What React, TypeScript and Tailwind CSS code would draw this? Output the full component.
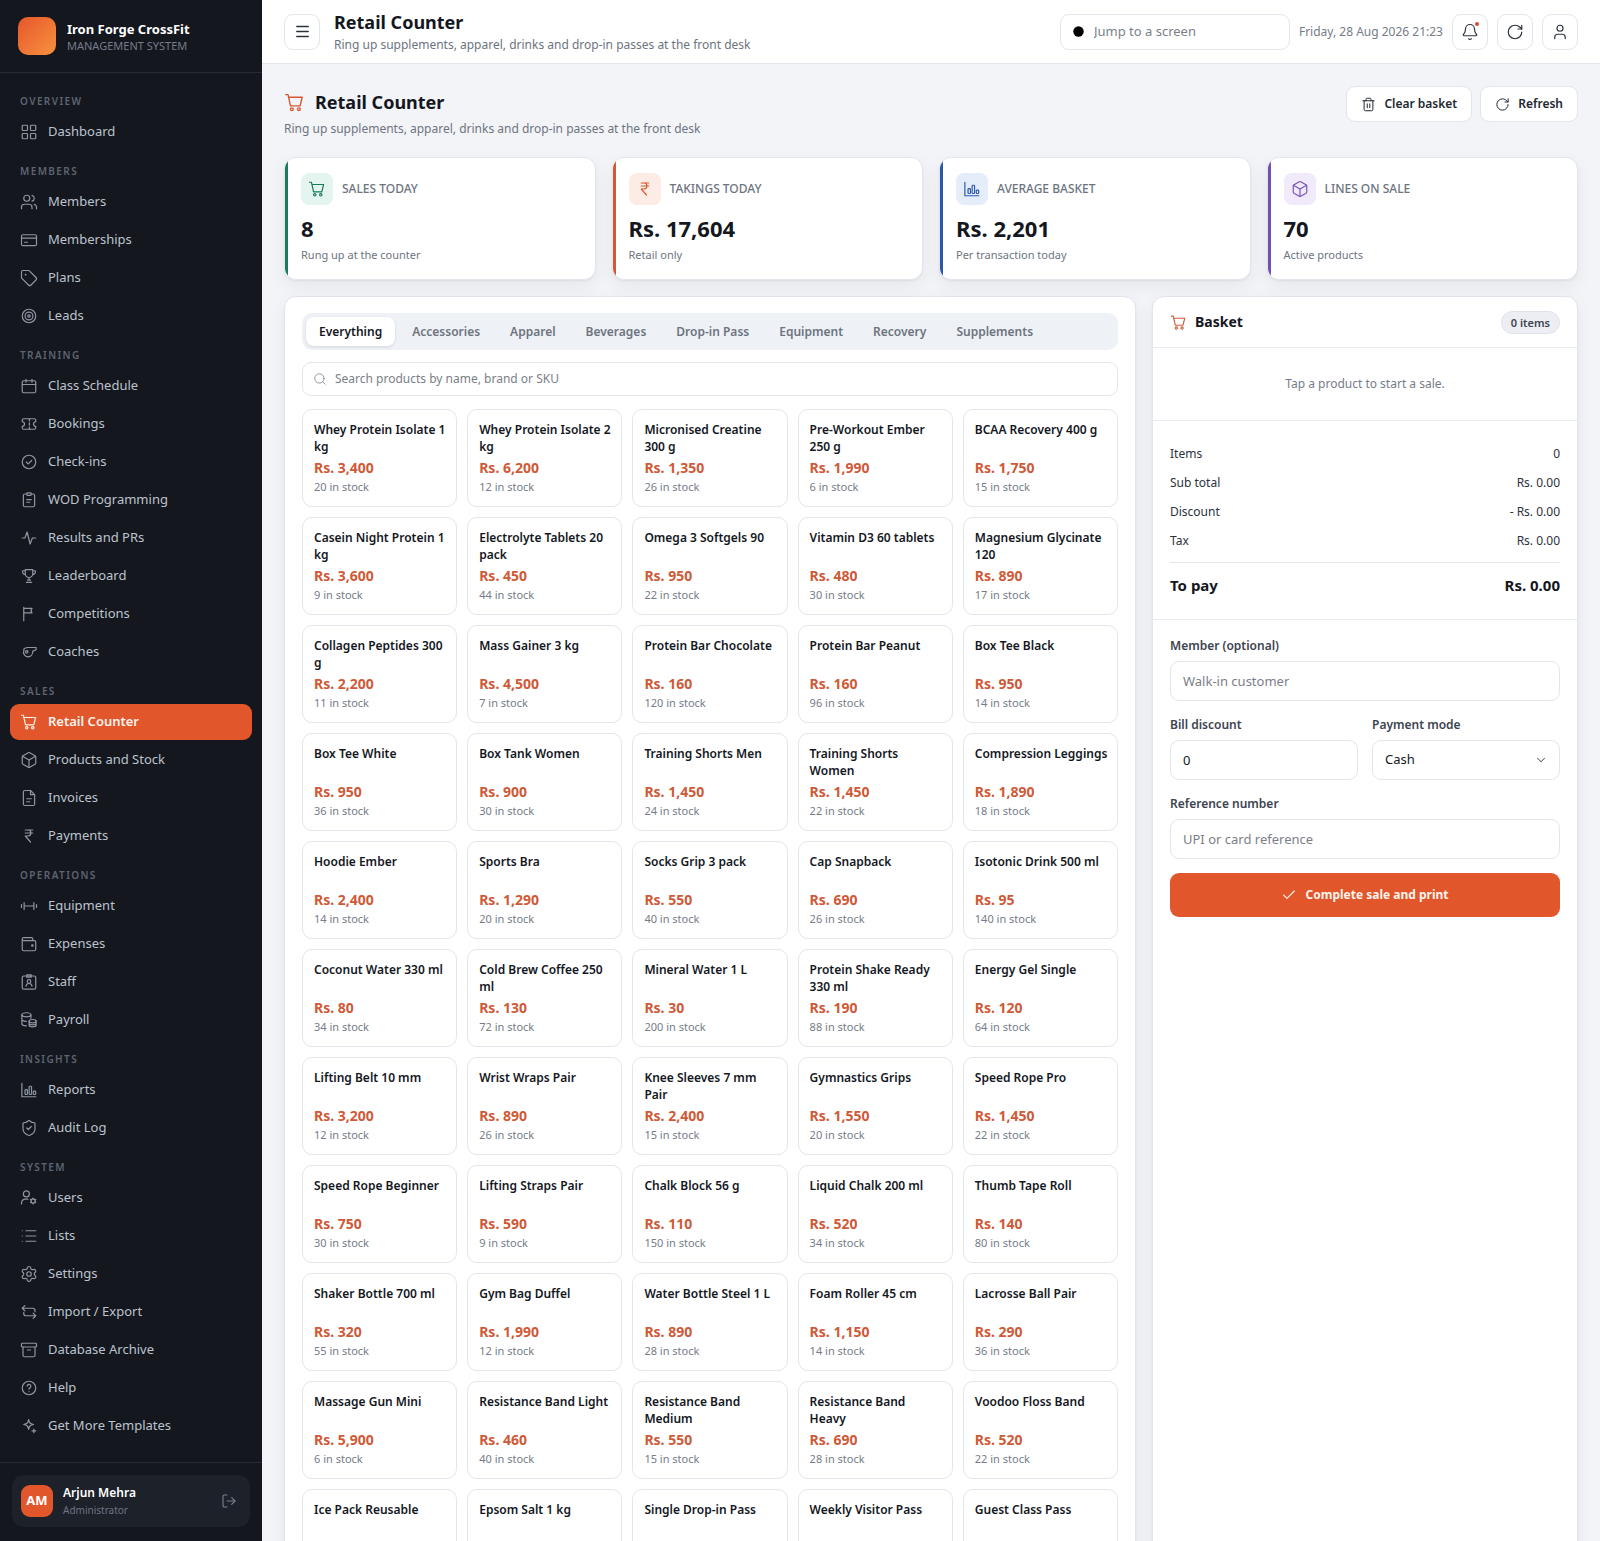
import type { ReactNode } from "react";
import {
  Archive,
  Bell,
  Box,
  Check,
  ChevronDown,
  LayoutGrid,
  List,
  LogOut,
  Menu,
  RotateCw,
  Search,
  Settings,
  ShieldCheck,
  Tag,
  Trash2,
  User,
  Users,
} from "lucide-react";

const Glyph = ({ size = 18, children }: { size?: number; children: ReactNode }) => (
  <svg
    width={size}
    height={size}
    viewBox="0 0 24 24"
    fill="none"
    stroke="currentColor"
    strokeWidth={1.6}
    strokeLinecap="round"
    strokeLinejoin="round"
    aria-hidden="true"
    className="shrink-0"
  >
    {children}
  </svg>
);

const CartIcon = ({ size }: { size?: number }) => (
  <Glyph size={size}>
    <path d="M2 3h2.6l2.8 12.8h11L20.8 6H5.3" />
    <circle cx="9" cy="19.7" r="1.6" />
    <circle cx="17" cy="19.7" r="1.6" />
  </Glyph>
);

const RupeeIcon = ({ size }: { size?: number }) => (
  <Glyph size={size}>
    <path d="M7 4h10M7 8h10M7 4h3.5a4 4 0 0 1 0 8H7l7 8" />
  </Glyph>
);

const BarsIcon = ({ size }: { size?: number }) => (
  <Glyph size={size}>
    <path d="M2.5 3v18H21" />
    <rect x="6.7" y="11.5" width="3.2" height="6.5" rx="1" />
    <rect x="12.2" y="7" width="3.2" height="11" rx="1" />
    <rect x="17.7" y="13.5" width="3.2" height="4.5" rx="1" />
  </Glyph>
);

const nav = [
  {
    title: "Overview",
    items: [{ name: "Dashboard", icon: <LayoutGrid size={18} strokeWidth={1.6} /> }],
  },
  {
    title: "Members",
    items: [
      { name: "Members", icon: <Users size={18} strokeWidth={1.6} /> },
      {
        name: "Memberships",
        icon: (
          <Glyph>
            <rect x="2" y="5" width="20" height="14.5" rx="2" />
            <path d="M2 9.5h20M6 15h4" />
          </Glyph>
        ),
      },
      {
        name: "Plans",
        icon: <Tag size={18} strokeWidth={1.6} />,
      },
      {
        name: "Leads",
        icon: (
          <Glyph>
            <circle cx="12" cy="12" r="9" />
            <circle cx="12" cy="12" r="5.2" />
            <circle cx="12" cy="12" r="1.6" />
          </Glyph>
        ),
      },
    ],
  },
  {
    title: "Training",
    items: [
      {
        name: "Class Schedule",
        icon: (
          <Glyph>
            <rect x="3" y="5" width="18" height="16" rx="2" />
            <path d="M8 3v4M16 3v4M3 10h18" />
          </Glyph>
        ),
      },
      {
        name: "Bookings",
        icon: (
          <Glyph>
            <path d="M3 7a2 2 0 0 1 2-2h14a2 2 0 0 1 2 2v2a3 3 0 0 0 0 6v2a2 2 0 0 1-2 2H5a2 2 0 0 1-2-2v-2a3 3 0 0 0 0-6z" />
            <path d="M12.5 5v3M12.5 10.5v3M12.5 16v3" />
          </Glyph>
        ),
      },
      {
        name: "Check-ins",
        icon: (
          <Glyph>
            <circle cx="12" cy="12" r="9" />
            <path d="m8.5 12 2.5 2.5 4.5-4.5" />
          </Glyph>
        ),
      },
      {
        name: "WOD Programming",
        icon: (
          <Glyph>
            <path d="M9 4H6.5a2 2 0 0 0-2 2v13a2 2 0 0 0 2 2h11a2 2 0 0 0 2-2V6a2 2 0 0 0-2-2H15" />
            <rect x="9" y="2.5" width="6" height="3.2" rx="1" />
            <path d="M9 11.5h6M9 15h4" />
          </Glyph>
        ),
      },
      {
        name: "Results and PRs",
        icon: (
          <Glyph>
            <path d="M3 12h3.500l3-8 4 16 3-8H21" />
          </Glyph>
        ),
      },
      {
        name: "Leaderboard",
        icon: (
          <Glyph>
            <path d="M7 3.5h10v5.500a5 5 0 0 1-10 0zM7 5H3.500v1.500a3.500 3.500 0 0 0 3.800 3.500M17 5h3.500v1.500a3.500 3.500 0 0 1-3.800 3.500M12 14v3.500M10 17.500h4M8.500 20.500h7" />
          </Glyph>
        ),
      },
      {
        name: "Competitions",
        icon: (
          <Glyph>
            <path d="M5 21V3M5 4.500h11l-1.500 3 1.500 3H5" />
          </Glyph>
        ),
      },
      {
        name: "Coaches",
        icon: (
          <Glyph>
            <path d="M10.500 6h11v3l-4.300 1.800c0 4.400-2.700 7.700-6.500 7.700a6.200 6.200 0 0 1-5.400-8.800M4.800 8.500C6 6.800 8 6 10.500 6" />
            <circle cx="9" cy="11.800" r="1.600" />
          </Glyph>
        ),
      },
    ],
  },
  {
    title: "Sales",
    items: [
      { name: "Retail Counter", icon: <CartIcon />, active: true },
      { name: "Products and Stock", icon: <Box size={18} strokeWidth={1.6} /> },
      {
        name: "Invoices",
        icon: (
          <Glyph>
            <path d="M14 2H6.500a2 2 0 0 0-2 2v16a2 2 0 0 0 2 2h11a2 2 0 0 0 2-2V7.500zM14 2v5.500h5.500M9 13h6M9 17h4" />
          </Glyph>
        ),
      },
      { name: "Payments", icon: <RupeeIcon /> },
    ],
  },
  {
    title: "Operations",
    items: [
      {
        name: "Equipment",
        icon: (
          <Glyph>
            <path d="M2 10v4M5.500 7.500v9M5.500 12h13M18.500 7.500v9M22 10v4" />
          </Glyph>
        ),
      },
      {
        name: "Expenses",
        icon: (
          <Glyph>
            <path d="M17 7.500V5a1.500 1.500 0 0 0-1.500-1.500H5a2 2 0 0 0 0 4h14a2 2 0 0 1 2 2V19a2 2 0 0 1-2 2H5a2 2 0 0 1-2-2V5.500" />
            <circle cx="16.500" cy="14" r="1" />
          </Glyph>
        ),
      },
      {
        name: "Staff",
        icon: (
          <Glyph>
            <rect x="3" y="4" width="18" height="17.500" rx="2" />
            <path d="M9 2.500h6v3H9zM8 17.500c.4-2.400 2-3.500 4-3.500s3.600 1.100 4 3.500" />
            <circle cx="12" cy="11.300" r="2.400" />
          </Glyph>
        ),
      },
      {
        name: "Payroll",
        icon: (
          <Glyph>
            <ellipse cx="8.500" cy="5" rx="6" ry="2.700" />
            <path d="M2.500 5v12c0 1.500 2.700 2.700 6 2.700M2.500 11c0 1.500 2.700 2.700 6 2.700M14.500 5v4.500" />
            <ellipse cx="16.800" cy="13.500" rx="4.700" ry="2.200" />
            <path d="M12.100 13.500V19c0 1.200 2.100 2.200 4.700 2.200s4.700-1 4.700-2.200v-5.500M12.100 16.300c0 1.200 2.100 2.200 4.700 2.200s4.700-1 4.700-2.200" />
          </Glyph>
        ),
      },
    ],
  },
  {
    title: "Insights",
    items: [
      { name: "Reports", icon: <BarsIcon /> },
      { name: "Audit Log", icon: <ShieldCheck size={18} strokeWidth={1.6} /> },
    ],
  },
  {
    title: "System",
    items: [
      {
        name: "Users",
        icon: (
          <Glyph>
            <circle cx="8.500" cy="6.500" r="4" />
            <path d="M2 20v-1.500a5 5 0 0 1 5-5h3.500" />
            <circle cx="17.500" cy="16" r="2.800" />
            <path d="M17.500 12v1.200M17.500 18.800V20M21 14l-1 .6M15 17.400l-1 .6M21 18l-1-.6M15 14.600 14 14" />
          </Glyph>
        ),
      },
      { name: "Lists", icon: <List size={18} strokeWidth={1.6} /> },
      { name: "Settings", icon: <Settings size={18} strokeWidth={1.6} /> },
      {
        name: "Import / Export",
        icon: (
          <Glyph>
            <path d="M6.500 3.500 3 7l3.500 3.500M3 7h14a3 3 0 0 1 3 3v1.500M17.500 13.500 21 17l-3.500 3.500M21 17H8a3 3 0 0 1-3-3v-1.500" />
          </Glyph>
        ),
      },
      { name: "Database Archive", icon: <Archive size={18} strokeWidth={1.6} /> },
      {
        name: "Help",
        icon: (
          <Glyph>
            <circle cx="12" cy="12" r="9" />
            <path d="M9.500 9.500a2.500 2.500 0 1 1 3.600 2.300c-.8.400-1.100.9-1.100 1.700M12 16.800v.1" />
          </Glyph>
        ),
      },
      {
        name: "Get More Templates",
        icon: (
          <Glyph>
            <path d="M11.500 3.500c.9 4.500 1.800 5.400 6.500 6.500-4.700 1.100-5.600 2-6.500 6.500-.9-4.500-1.800-5.400-6.500-6.500 4.700-1.100 5.600-2 6.500-6.500zM18.500 16v5M16 18.500h5" />
          </Glyph>
        ),
      },
    ],
  },
];

const stats = [
  {
    label: "Sales today",
    value: "8",
    note: "Rung up at the counter",
    icon: <CartIcon size={18} />,
    edge: "bg-[#1b7a5a]",
    tile: "bg-[#e3f5ee] text-[#1b7a5a]",
  },
  {
    label: "Takings today",
    value: "Rs. 17,604",
    note: "Retail only",
    icon: <RupeeIcon size={18} />,
    edge: "bg-[#cf5a35]",
    tile: "bg-[#fdece5] text-[#d95c34]",
  },
  {
    label: "Average basket",
    value: "Rs. 2,201",
    note: "Per transaction today",
    icon: <BarsIcon size={18} />,
    edge: "bg-[#2c56a8]",
    tile: "bg-[#e6edfa] text-[#2f5bb0]",
  },
  {
    label: "Lines on sale",
    value: "70",
    note: "Active products",
    icon: <Box size={18} strokeWidth={1.6} />,
    edge: "bg-[#7350b0]",
    tile: "bg-[#f0eafb] text-[#7a55bd]",
  },
];

const tabs = [
  "Everything",
  "Accessories",
  "Apparel",
  "Beverages",
  "Drop-in Pass",
  "Equipment",
  "Recovery",
  "Supplements",
];

const products: [string, string, number][] = [
  ["Whey Protein Isolate 1 kg", "3,400", 20],
  ["Whey Protein Isolate 2 kg", "6,200", 12],
  ["Micronised Creatine 300 g", "1,350", 26],
  ["Pre-Workout Ember 250 g", "1,990", 6],
  ["BCAA Recovery 400 g", "1,750", 15],
  ["Casein Night Protein 1 kg", "3,600", 9],
  ["Electrolyte Tablets 20 pack", "450", 44],
  ["Omega 3 Softgels 90", "950", 22],
  ["Vitamin D3 60 tablets", "480", 30],
  ["Magnesium Glycinate 120", "890", 17],
  ["Collagen Peptides 300 g", "2,200", 11],
  ["Mass Gainer 3 kg", "4,500", 7],
  ["Protein Bar Chocolate", "160", 120],
  ["Protein Bar Peanut", "160", 96],
  ["Box Tee Black", "950", 14],
  ["Box Tee White", "950", 36],
  ["Box Tank Women", "900", 30],
  ["Training Shorts Men", "1,450", 24],
  ["Training Shorts Women", "1,450", 22],
  ["Compression Leggings", "1,890", 18],
  ["Hoodie Ember", "2,400", 14],
  ["Sports Bra", "1,290", 20],
  ["Socks Grip 3 pack", "550", 40],
  ["Cap Snapback", "690", 26],
  ["Isotonic Drink 500 ml", "95", 140],
  ["Coconut Water 330 ml", "80", 34],
  ["Cold Brew Coffee 250 ml", "130", 72],
  ["Mineral Water 1 L", "30", 200],
  ["Protein Shake Ready 330 ml", "190", 88],
  ["Energy Gel Single", "120", 64],
  ["Lifting Belt 10 mm", "3,200", 12],
  ["Wrist Wraps Pair", "890", 26],
  ["Knee Sleeves 7 mm Pair", "2,400", 15],
  ["Gymnastics Grips", "1,550", 20],
  ["Speed Rope Pro", "1,450", 22],
  ["Speed Rope Beginner", "750", 30],
  ["Lifting Straps Pair", "590", 9],
  ["Chalk Block 56 g", "110", 150],
  ["Liquid Chalk 200 ml", "520", 34],
  ["Thumb Tape Roll", "140", 80],
  ["Shaker Bottle 700 ml", "320", 55],
  ["Gym Bag Duffel", "1,990", 12],
  ["Water Bottle Steel 1 L", "890", 28],
  ["Foam Roller 45 cm", "1,150", 14],
  ["Lacrosse Ball Pair", "290", 36],
  ["Massage Gun Mini", "5,900", 6],
  ["Resistance Band Light", "460", 40],
  ["Resistance Band Medium", "550", 15],
  ["Resistance Band Heavy", "690", 28],
  ["Voodoo Floss Band", "520", 22],
  ["Ice Pack Reusable", "350", 24],
  ["Epsom Salt 1 kg", "280", 32],
  ["Single Drop-in Pass", "500", 999],
  ["Weekly Visitor Pass", "2,000", 999],
  ["Guest Class Pass", "400", 999],
];

const totals = [
  ["Items", "0"],
  ["Sub total", "Rs. 0.00"],
  ["Discount", "- Rs. 0.00"],
  ["Tax", "Rs. 0.00"],
];

const card =
  "rounded-xl border border-[#e2e5eb] bg-white shadow-[0_1px_2px_rgba(20,23,30,0.05),0_6px_18px_rgba(20,23,30,0.06)]";
const iconButton =
  "relative flex size-9 shrink-0 items-center justify-center rounded-[9px] border border-[#e2e5eb] bg-white text-[#2c323d]";
const headButton =
  "flex h-9 items-center gap-2 rounded-[9px] border border-[#e2e5eb] bg-white px-3.5 text-xs font-semibold text-[#22272f]";
const field =
  "h-10 w-full rounded-[9px] border border-[#e2e5eb] bg-white px-3 text-[13px] text-[#14171e] placeholder:text-[#7b8088]";
const fieldLabel = "mb-1.5 block text-xs leading-[19px] font-semibold text-[#3d4450]";

const Sidebar = () => (
  <aside className="sticky top-0 flex h-screen w-[262px] shrink-0 flex-col bg-[#14171e]">
    <div className="flex h-[73px] shrink-0 items-center gap-[11px] border-b border-[#262b35] px-[18px]">
      <span className="size-[38px] rounded-[10px] bg-linear-135 from-[#e6552b] to-[#f7913f]" />
      <div>
        <div className="text-[13px] leading-[18px] font-bold text-white">Iron Forge CrossFit</div>
        <div className="text-[11px] leading-[15px] text-[#747b89] uppercase">Management System</div>
      </div>
    </div>
    <nav className="min-h-0 flex-1 px-2.5 pt-[7px]">
      {nav.map((group) => (
        <div key={group.title}>
          <h2 className="px-2.5 pt-[13px] pb-[5px] text-[10px] leading-4 font-semibold tracking-[1.4px] text-[#5d6472] uppercase">
            {group.title}
          </h2>
          <ul className="flex flex-col gap-0.5">
            {group.items.map((item) => (
              <li key={item.name}>
                <a
                  href="#"
                  className={
                    "active" in item
                      ? "flex h-9 items-center gap-2.5 rounded-[9px] bg-[#e2562b] px-2.5 text-[13px] font-semibold text-[#fff3ec]"
                      : "flex h-9 items-center gap-2.5 rounded-[9px] px-2.5 text-[13px] text-[#bcc3ce] [&_svg]:text-[#8f96a3]"
                  }
                >
                  {item.icon}
                  {item.name}
                </a>
              </li>
            ))}
          </ul>
        </div>
      ))}
    </nav>
    <div className="border-t border-[#262b35] p-3 pb-3.5">
      <div className="flex items-center gap-2.5 rounded-xl bg-[#1d2129] px-[9px] py-[9px]">
        <span className="flex size-8 items-center justify-center rounded-[9px] bg-[#e2562b] text-[13px] font-bold text-white">
          AM
        </span>
        <div className="flex-1">
          <div className="text-xs leading-[18px] font-semibold text-white">Arjun Mehra</div>
          <div className="text-[10px] leading-4 text-[#6d7483]">Administrator</div>
        </div>
        <button type="button" aria-label="Sign out" className="mr-1 text-[#7b8290]">
          <LogOut size={16} strokeWidth={1.6} />
        </button>
      </div>
    </div>
  </aside>
);

const Topbar = () => (
  <header className="sticky top-0 z-10 flex h-16 items-center gap-[9px] border-b border-[#e2e5eb] bg-white px-[22px]">
    <button type="button" aria-label="Toggle menu" className={iconButton}>
      <Menu size={17} strokeWidth={2.2} />
    </button>
    <div className="ml-[5px] flex-1 pt-[3px]">
      <div className="text-lg leading-6 font-bold text-[#14171e]">Retail Counter</div>
      <div className="text-xs leading-[22px] text-[#6d7480]">
        Ring up supplements, apparel, drinks and drop-in passes at the front desk
      </div>
    </div>
    <label className="flex h-9 w-[230px] items-center gap-2.5 rounded-[9px] border border-[#e2e5eb] px-3">
      <svg width="11" height="11" viewBox="0 0 11 11" aria-hidden="true" className="shrink-0">
        <circle cx="5.5" cy="5.5" r="5.2" />
      </svg>
      <input
        type="text"
        aria-label="Jump to a screen"
        placeholder="Jump to a screen"
        className="w-full text-[13px] placeholder:text-[#7b8088]"
      />
    </label>
    <time className="text-xs text-[#757c88]">Friday, 28 Aug 2026 21:23</time>
    <button type="button" aria-label="Notifications" className={iconButton}>
      <Bell size={18} strokeWidth={1.6} />
      <span className="absolute top-[7px] right-2 size-1 rounded-full bg-[#dc4a35]" />
    </button>
    <button type="button" aria-label="Reload" className={iconButton}>
      <RotateCw size={18} strokeWidth={1.6} />
    </button>
    <button type="button" aria-label="Account" className={iconButton}>
      <User size={18} strokeWidth={1.6} />
    </button>
  </header>
);

const Catalogue = () => (
  <section className={`${card} px-[17px] pt-4 pb-[17px]`}>
    <div role="tablist" className="flex flex-wrap gap-1 rounded-[10px] bg-[#eef1f6] p-1">
      {tabs.map((tab, index) => (
        <button
          key={tab}
          type="button"
          role="tab"
          aria-selected={index === 0}
          className={
            index === 0
              ? "h-[29px] rounded-lg bg-white px-[13px] text-xs font-semibold text-[#14171e] shadow-[0_1px_3px_rgba(20,23,30,0.12)]"
              : "h-[29px] rounded-lg px-[13px] text-xs font-semibold text-[#6d7480]"
          }
        >
          {tab}
        </button>
      ))}
    </div>
    <label className="mt-3 flex h-[34px] items-center gap-2 rounded-[9px] border border-[#e2e5eb] px-2.5 text-[#8a919d]">
      <Search size={14} strokeWidth={1.6} className="shrink-0" />
      <input
        type="search"
        aria-label="Search products"
        placeholder="Search products by name, brand or SKU"
        className="w-full text-xs text-[#14171e] placeholder:text-[#7b8088]"
      />
    </label>
    <div className="mt-[13px] grid grid-cols-5 gap-2.5">
      {products.map(([name, price, stock]) => (
        <button
          key={name}
          type="button"
          className="rounded-[10px] border border-[#e2e5eb] bg-white pt-[11px] pr-2 pb-[11px] pl-[11px] text-left"
        >
          <span className="block h-[34px] text-xs leading-[17px] font-semibold text-[#14171e]">
            {name}
          </span>
          <span className="mt-0.5 block text-sm leading-[22px] font-bold text-[#cf5a38]">
            Rs. {price}
          </span>
          <span className="block text-[11px] leading-4 text-[#757c88]">{stock} in stock</span>
        </button>
      ))}
    </div>
  </section>
);

const Basket = () => (
  <section className={card}>
    <div className="flex h-[51px] items-center border-b border-[#e8eaef] px-[17px]">
      <span className="text-[#cf5a38]">
        <CartIcon size={17} />
      </span>
      <h2 className="ml-2 flex-1 text-sm font-bold text-[#14171e]">Basket</h2>
      <span className="rounded-full border border-[#dfe2e9] bg-[#eceef4] px-[9px] text-[11px] leading-[21px] font-semibold text-[#3d4450]">
        0 items
      </span>
    </div>
    <p className="border-b border-[#e8eaef] py-[26px] text-center text-xs leading-5 text-[#757c88]">
      Tap a product to start a sale.
    </p>
    <div className="border-b border-[#e8eaef] px-[17px] pt-[18px] pb-[19px]">
      <dl className="text-xs leading-[29px] text-[#2c323d]">
        {totals.map(([name, amount]) => (
          <div key={name} className="flex justify-between">
            <dt>{name}</dt>
            <dd>{amount}</dd>
          </div>
        ))}
        <div className="mt-[7px] flex justify-between border-t border-[#e2e5eb] pt-2 text-[15px] font-bold text-[#14171e]">
          <dt>To pay</dt>
          <dd>Rs. 0.00</dd>
        </div>
      </dl>
    </div>
    <form className="flex flex-col gap-3.5 px-[17px] py-4">
      <div>
        <label htmlFor="member" className={fieldLabel}>
          Member (optional)
        </label>
        <input id="member" type="text" placeholder="Walk-in customer" className={field} />
      </div>
      <div className="grid grid-cols-2 gap-3.5">
        <div>
          <label htmlFor="discount" className={fieldLabel}>
            Bill discount
          </label>
          <input id="discount" type="text" inputMode="decimal" defaultValue="0" className={field} />
        </div>
        <div>
          <label htmlFor="mode" className={fieldLabel}>
            Payment mode
          </label>
          <div className="relative">
            <select id="mode" className={`${field} appearance-none`}>
              <option>Cash</option>
              <option>Card</option>
              <option>UPI</option>
            </select>
            <ChevronDown
              size={14}
              strokeWidth={1.8}
              className="pointer-events-none absolute top-[13px] right-3 text-[#5a616d]"
            />
          </div>
        </div>
      </div>
      <div>
        <label htmlFor="reference" className={fieldLabel}>
          Reference number
        </label>
        <input id="reference" type="text" placeholder="UPI or card reference" className={field} />
      </div>
      <button
        type="button"
        className="flex h-11 items-center justify-center gap-2 rounded-[9px] bg-[#e2562b] text-xs font-bold text-[#fff3ec]"
      >
        <Check size={16} strokeWidth={1.6} />
        Complete sale and print
      </button>
    </form>
  </section>
);

const App = () => {
  return (
    <div className="flex min-h-screen bg-[#f3f4f8] font-['Noto_Sans',sans-serif] text-[#14171e]">
      <Sidebar />
      <div className="min-w-0 flex-1">
        <Topbar />
        <main className="px-[22px] pt-[22px] pb-8">
          <div className="flex items-start gap-2">
            <div className="flex-1">
              <h1 className="flex items-center gap-2.5 text-lg leading-8 font-bold">
                <span className="text-[#d9582f]">
                  <CartIcon size={21} />
                </span>
                Retail Counter
              </h1>
              <p className="text-xs leading-[22px] text-[#6d7480]">
                Ring up supplements, apparel, drinks and drop-in passes at the front desk
              </p>
            </div>
            <button type="button" className={headButton}>
              <Trash2 size={15} strokeWidth={1.6} />
              Clear basket
            </button>
            <button type="button" className={headButton}>
              <RotateCw size={15} strokeWidth={1.6} />
              Refresh
            </button>
          </div>
          <div className="mt-[17px] grid grid-cols-4 gap-4">
            {stats.map((stat) => (
              <div key={stat.label} className={`${card} relative overflow-hidden px-4 pt-[15px] pb-3.5`}>
                <span className={`absolute inset-y-0 left-0 w-[3px] ${stat.edge}`} />
                <div className="flex items-center gap-[9px]">
                  <span className={`flex size-8 items-center justify-center rounded-lg ${stat.tile}`}>
                    {stat.icon}
                  </span>
                  <span className="text-xs font-medium text-[#6d7480] uppercase">{stat.label}</span>
                </div>
                <div className="mt-[7px] text-[22px] leading-8 font-bold">{stat.value}</div>
                <div className="mt-px text-[11px] leading-5 text-[#6d7480]">{stat.note}</div>
              </div>
            ))}
          </div>
          <div className="mt-4 grid grid-cols-[2fr_1fr] gap-4">
            <Catalogue />
            <Basket />
          </div>
        </main>
      </div>
    </div>
  );
};

export default App;
